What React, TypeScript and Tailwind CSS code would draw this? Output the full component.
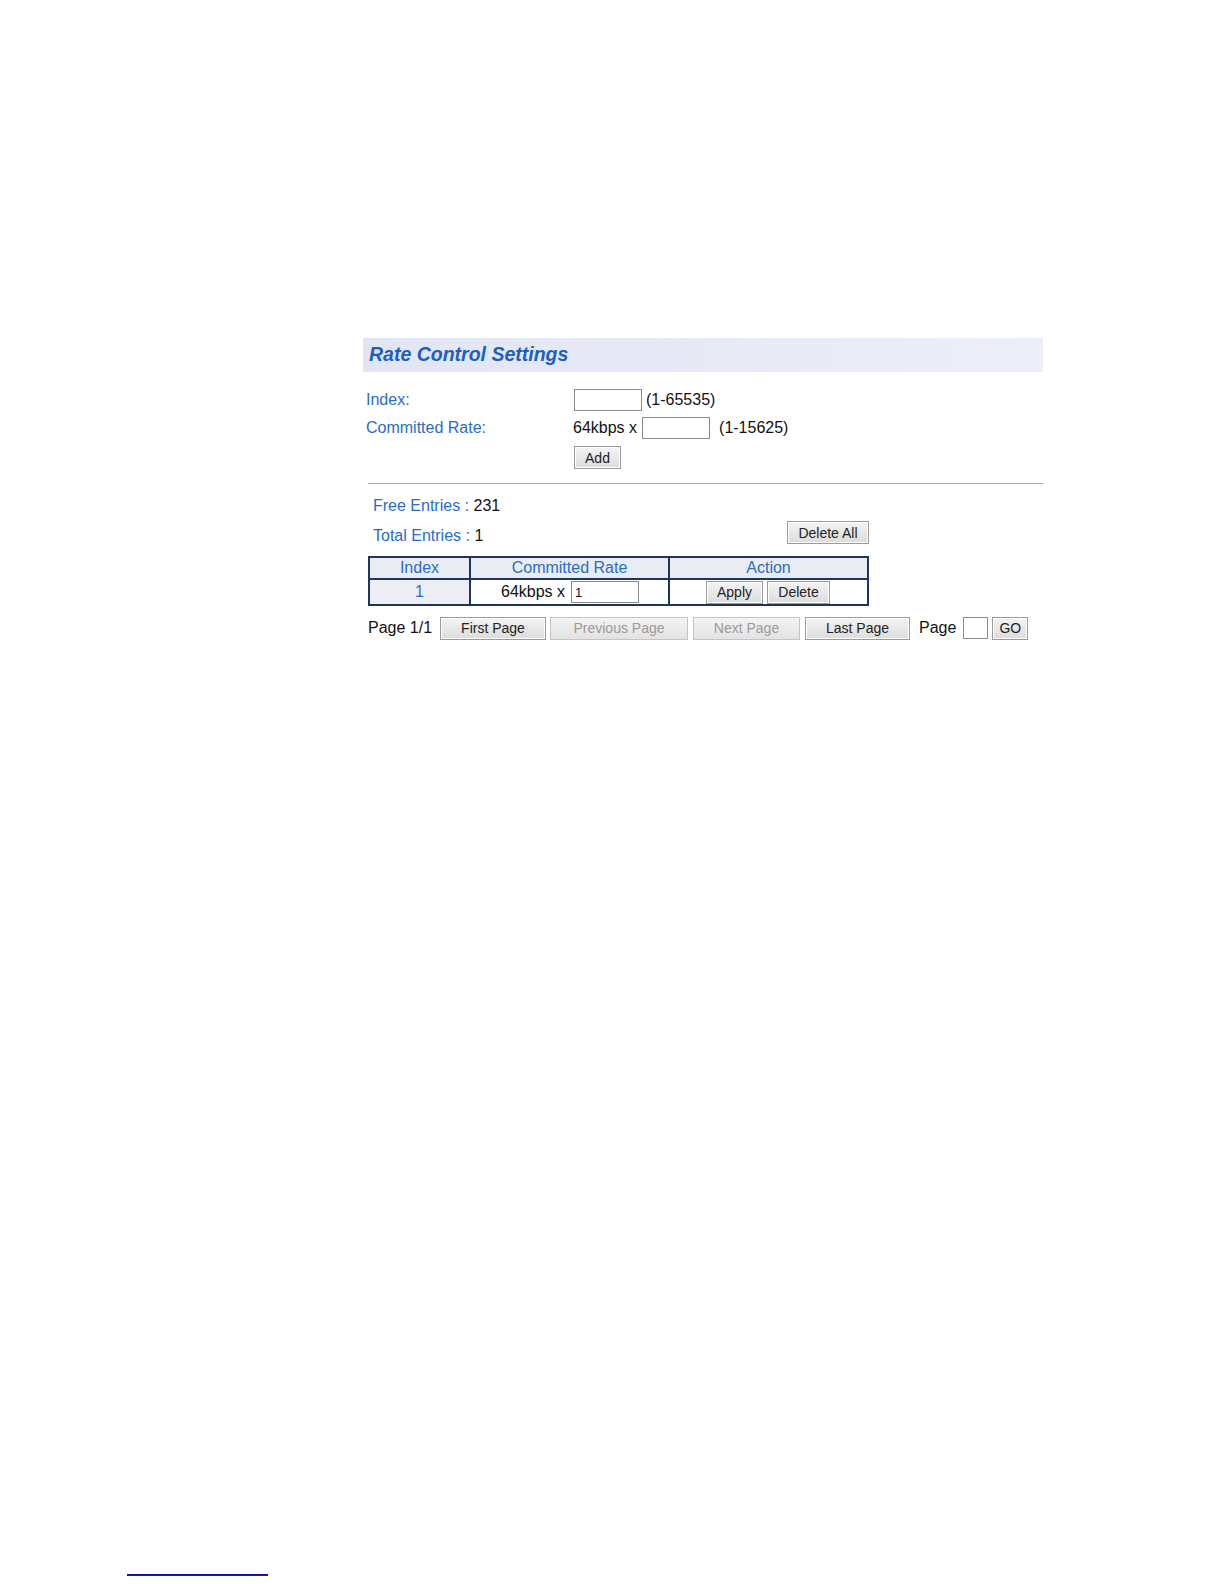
export default function App() {
  const btn =
    "h-[23px] border border-[#9a9a9a] bg-gradient-to-b from-[#f4f4f4] to-[#dcdcdc] text-[14px] text-[#222] leading-none shadow-[inset_0_0_0_1px_#fff]";
  const btnOff =
    "h-[23px] border border-[#c4c4c4] bg-gradient-to-b from-[#f4f4f4] to-[#e2e2e2] text-[14px] text-[#9a9a9a] leading-none";
  return (
    <div className="flex h-screen w-full flex-col overflow-hidden bg-white font-['Liberation_Sans',Arial,sans-serif]">
      <div className="ml-[363px] w-[680px] pt-[338px]">
        <div className="flex h-[34px] items-center bg-gradient-to-r from-[#e2e5f3] to-[#eceef8] pl-[6px]">
          <h1 className="text-[19.5px] font-bold italic text-[#1b5fc4]">Rate Control Settings</h1>
        </div>

        <div className="mt-[16px] flex flex-col text-[16px]">
          <div className="flex h-[24px] items-center">
            <span className="w-[211px] pl-[3px] text-[#2a6cc8]">Index:</span>
            <input className="h-[22px] w-[68px] border border-[#8a8a8a] bg-white" />
            <span className="ml-[4px] text-[#111]">(1-65535)</span>
          </div>
          <div className="mt-[4px] flex h-[24px] items-center">
            <span className="w-[210px] pl-[3px] text-[#2a6cc8]">Committed Rate:</span>
            <span className="text-[#111]">64kbps x</span>
            <input className="ml-[5px] h-[22px] w-[68px] border border-[#8a8a8a] bg-white" />
            <span className="ml-[9px] text-[#111]">(1-15625)</span>
          </div>
          <div className="mt-[6px] flex pl-[211px]">
            <button className={`${btn} w-[47px]`}>Add</button>
          </div>
        </div>

        <div className="ml-[5px] mt-[14px] h-px bg-[#a8a8a8]" />

        <div className="ml-[5px] text-[16px]">
          <div className="mt-[10px] pl-[5px]">
            <span className="text-[#2a6cc8]">Free Entries : </span>
            <span className="text-[#111]">231</span>
          </div>
          <div className="mt-[3px] flex h-[27px] w-[501px] items-start justify-between">
            <div className="pl-[5px] pt-[3px]">
              <span className="text-[#2a6cc8]">Total Entries : </span>
              <span className="text-[#111]">1</span>
            </div>
            <button className={`${btn} w-[82px]`}>Delete All</button>
          </div>

          <table className="mt-[8px] w-[501px] border-collapse border-2 border-[#1c355e] text-[16px]">
            <thead>
              <tr className="h-[22px] bg-[#e9ecf3] text-[#2a6cc8]">
                <th className="w-[101px] border-2 border-[#1c355e] font-normal leading-none">Index</th>
                <th className="w-[199px] border-2 border-[#1c355e] font-normal leading-none">Committed Rate</th>
                <th className="border-2 border-[#1c355e] font-normal leading-none">Action</th>
              </tr>
            </thead>
            <tbody>
              <tr className="h-[25px]">
                <td className="border-2 border-[#1c355e] bg-[#eceef4] text-center text-[#2a6cc8]">1</td>
                <td className="border-2 border-[#1c355e] text-[#111]">
                  <div className="flex items-center pl-[30px]">
                    <span>64kbps x</span>
                    <input
                      defaultValue="1"
                      className="ml-[6px] h-[22px] w-[68px] border border-[#8a8a8a] bg-white px-[3px] text-[13px]"
                    />
                  </div>
                </td>
                <td className="border-2 border-[#1c355e]">
                  <div className="flex items-center pl-[36px]">
                    <button className={`${btn} w-[57px]`}>Apply</button>
                    <button className={`${btn} ml-[4px] w-[63px]`}>Delete</button>
                  </div>
                </td>
              </tr>
            </tbody>
          </table>
        </div>

        <div className="ml-[5px] mt-[10px] flex items-center text-[16px] text-[#111]">
          <span className="w-[72px]">Page 1/1</span>
          <button className={`${btn} w-[106px]`}>First Page</button>
          <button className={`${btnOff} ml-[4px] w-[138px]`} disabled>
            Previous Page
          </button>
          <button className={`${btnOff} ml-[5px] w-[107px]`} disabled>
            Next Page
          </button>
          <button className={`${btn} ml-[5px] w-[105px]`}>Last Page</button>
          <span className="ml-[9px]">Page</span>
          <input className="ml-[7px] h-[22px] w-[25px] border border-[#8a8a8a] bg-white" />
          <button className={`${btn} ml-[4px] w-[36px]`}>GO</button>
        </div>
      </div>

      <div className="flex-1" />
      <div className="mb-[8px] ml-[127px] h-[2px] w-[141px] shrink-0 bg-[#1a1a8a]" />
    </div>
  );
}
